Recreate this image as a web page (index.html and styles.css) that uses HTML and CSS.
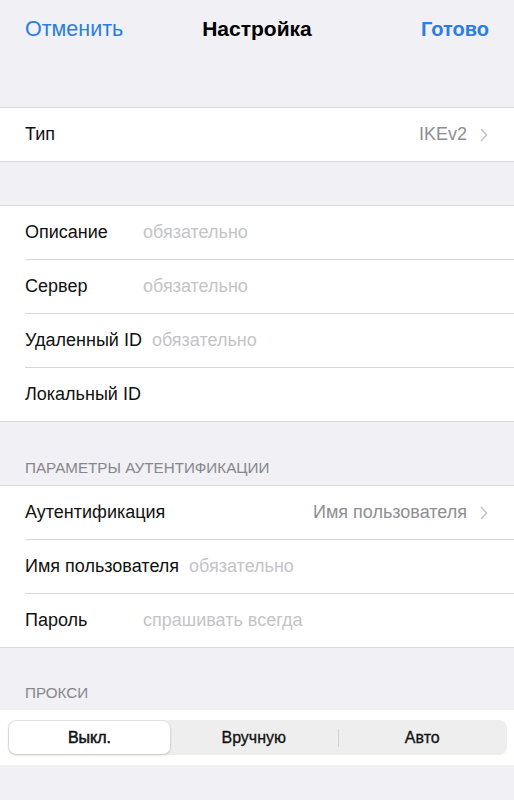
FILE: index.html
```html
<!DOCTYPE html>
<html lang="ru">
<head>
<meta charset="utf-8">
<link rel="stylesheet" href="styles.css">
</head>
<body>
<div class="page">
  <header class="nav">
    <span class="nav-btn">Отменить</span>
    <span class="nav-title">Настройка</span>
    <span class="nav-btn done">Готово</span>
  </header>
  <div class="gap g1"></div>
  <section class="group">
    <div class="row">
      <span class="label">Тип</span>
      <span class="value">IKEv2</span>
      <svg class="chev" width="8" height="14" viewBox="0 0 8 14"><polyline points="1.5,1.5 6.5,7 1.5,12.5" fill="none" stroke="#c4c4c7" stroke-width="1.6" stroke-linecap="round" stroke-linejoin="round"/></svg>
    </div>
  </section>
  <div class="gap g2"></div>
  <section class="group">
    <div class="row"><span class="label fixed">Описание</span><span class="ph">обязательно</span></div>
    <div class="row"><span class="label fixed">Сервер</span><span class="ph">обязательно</span></div>
    <div class="row"><span class="label fixed">Удаленный ID</span><span class="ph">обязательно</span></div>
    <div class="row"><span class="label fixed">Локальный ID</span></div>
  </section>
  <div class="hdr h1">ПАРАМЕТРЫ АУТЕНТИФИКАЦИИ</div>
  <section class="group">
    <div class="row">
      <span class="label">Аутентификация</span>
      <span class="value">Имя пользователя</span>
      <svg class="chev" width="8" height="14" viewBox="0 0 8 14"><polyline points="1.5,1.5 6.5,7 1.5,12.5" fill="none" stroke="#c4c4c7" stroke-width="1.6" stroke-linecap="round" stroke-linejoin="round"/></svg>
    </div>
    <div class="row"><span class="label fixed">Имя пользователя</span><span class="ph">обязательно</span></div>
    <div class="row"><span class="label fixed">Пароль</span><span class="ph">спрашивать всегда</span></div>
  </section>
  <div class="hdr h2">ПРОКСИ</div>
  <section class="band">
    <div class="seg">
      <div class="seg-item active">Выкл.</div>
      <div class="seg-item">Вручную</div>
      <div class="seg-div"></div>
      <div class="seg-item">Авто</div>
    </div>
  </section>
</div>
</body>
</html>
```
FILE: styles.css
```css
* { box-sizing: border-box; }
html, body { margin: 0; padding: 0; }
body {
  background: #f0f0f5;
  font-family: "Liberation Sans", Arial, sans-serif;
  color: #000;
  width: 514px;
  height: 800px;
  overflow: hidden;
}
.page { display: flex; flex-direction: column; }
.nav {
  height: 58px;
  display: flex;
  align-items: center;
  justify-content: space-between;
  padding: 0 25px 0 25px;
  position: relative;
}
.nav-btn { font-size: 21.5px; color: #2a7de1; }
.nav-btn.done { font-size: 20px; font-weight: bold; }
.nav-title {
  font-size: 21px;
  font-weight: bold;
  position: absolute;
  left: 0; right: 0;
  text-align: center;
  pointer-events: none;
}
.gap.g1 { height: 49px; }
.gap.g2 { height: 43px; }
.group {
  background: #fff;
  border-top: 1px solid #d9d9dd;
  border-bottom: 1px solid #d9d9dd;
  padding-left: 25px;
}
.row {
  height: 54px;
  display: flex;
  align-items: center;
  padding-right: 26px;
  border-bottom: 1px solid #d6d6da;
  font-size: 18px;
}
.row:last-child { height: 53px; border-bottom: none; }
.label { flex: 0 0 auto; color: #111; }
.label.fixed { min-width: 108px; margin-right: 10px; }
.ph { color: #c4c4c7; }
.value { margin-left: auto; color: #8e8e93; }
.chev { margin-left: 13px; }
.hdr {
  display: flex;
  align-items: flex-end;
  padding: 0 25px 9px 25px;
  font-size: 15.2px;
  line-height: 16px;
  color: #86868b;
}
.hdr.h1 { height: 63px; }
.hdr.h2 { height: 62px; }
.band {
  background: #fff;
  padding: 10px 7px 10px 8px;
}
.seg {
  height: 35px;
  background: #eeeeef;
  border-radius: 8px;
  padding: 1px;
  display: flex;
  align-items: center;
}
.seg-item {
  flex: 1 1 0;
  height: 33px;
  display: flex;
  align-items: center;
  justify-content: center;
  font-size: 16px;
  color: #111;
  -webkit-text-stroke: 0.3px #111;
}
.seg-item.active {
  flex: 0 0 161px;
  background: #fff;
  border-radius: 7px;
  box-shadow: 0 1px 3px rgba(0,0,0,0.18), 0 0 0 0.5px rgba(0,0,0,0.05);
  -webkit-text-stroke: 0.5px #111;
}
.seg-div {
  width: 1px;
  height: 18px;
  background: #d3d3d6;
}
```
